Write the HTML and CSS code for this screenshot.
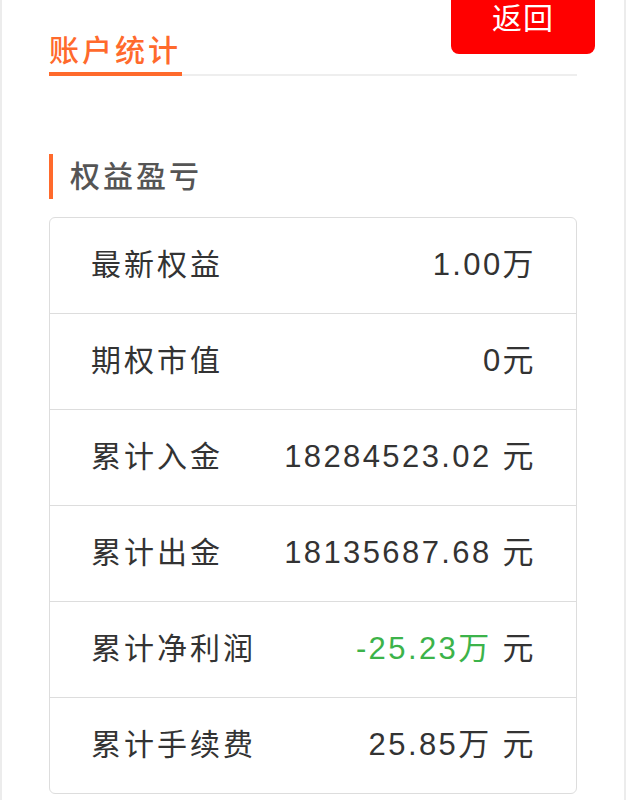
FILE: index.html
```html
<!DOCTYPE html>
<html lang="zh">
<head>
    <meta charset="UTF-8">
    <meta name="viewport" content="width=device-width, initial-scale=1.0">
    <title>账户统计</title>
    <link rel="stylesheet" href="styles.css">
</head>
<body>

    <div class="page">
        <a class="btn-back" href="#">返回</a>

        <div class="tabs">
            <span class="tab active">账户统计</span>
        </div>

        <h3 class="section-title">权益盈亏</h3>

        <div class="stat-table">
            <div class="stat-row">
                <span class="label">最新权益</span>
                <span class="value">1.00万</span>
            </div>
            <div class="stat-row">
                <span class="label">期权市值</span>
                <span class="value">0元</span>
            </div>
            <div class="stat-row">
                <span class="label">累计入金</span>
                <span class="value">18284523.02 元</span>
            </div>
            <div class="stat-row">
                <span class="label">累计出金</span>
                <span class="value">18135687.68 元</span>
            </div>
            <div class="stat-row">
                <span class="label">累计净利润</span>
                <span class="value"><span class="down">-25.23万</span> 元</span>
            </div>
            <div class="stat-row">
                <span class="label">累计手续费</span>
                <span class="value">25.85万 元</span>
            </div>
        </div>
    </div>

</body>
</html>
```

FILE: styles.css
```css
body {
    margin: 0;
    background-color: #ececec;
    font-family: "Liberation Sans", "Noto Sans CJK SC", sans-serif;
    color: #333;
}
.page {
    position: relative;
    margin: 0 2px;
    padding: 0 47px 40px;
    min-height: 800px;
    background-color: #fff;
    box-sizing: border-box;
}
.btn-back {
    position: absolute;
    top: 0;
    right: 29px;
    width: 144px;
    height: 54px;
    line-height: 38px;
    text-align: center;
    background-color: #ff0000;
    color: #fff;
    font-size: 30px;
    letter-spacing: 1px;
    text-decoration: none;
    border-radius: 0 0 8px 8px;
}
.tabs {
    padding-top: 30px;
    border-bottom: 2px solid #eee;
}
.tab {
    display: inline-block;
    font-size: 30px;
    font-weight: 500;
    line-height: 42px;
    letter-spacing: 3px;
    margin-bottom: -2px;
    padding-right: 1px;
}
.tab.active {
    color: #ff6a2c;
    border-bottom: 4px solid #ff6a2c;
}
.section-title {
    margin: 78px 0 18px;
    padding-left: 17px;
    border-left: 4px solid #ff6a2c;
    font-size: 30px;
    line-height: 45px;
    font-weight: 500;
    letter-spacing: 3px;
    color: #555;
}
.stat-table {
    border: 1px solid #ddd;
    border-radius: 6px;
}
.stat-row {
    display: flex;
    justify-content: space-between;
    align-items: center;
    box-sizing: border-box;
    height: 96px;
    padding: 0 40px 8px 41px;
    border-bottom: 1px solid #ddd;
    font-size: 30px;
    letter-spacing: 3px;
}
.stat-row:last-child {
    height: 95px;
    border-bottom: none;
}
.value {
    font-size: 31px;
    letter-spacing: 2.4px;
}
.down {
    color: #3cb34a;
}
```
